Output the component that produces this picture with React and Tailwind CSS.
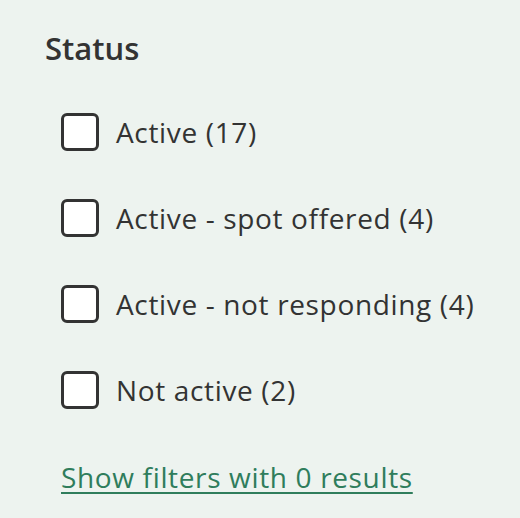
import { useState } from 'react';

const options = [
  { label: 'Active', count: 17 },
  { label: 'Active - spot offered', count: 4 },
  { label: 'Active - not responding', count: 4 },
  { label: 'Not active', count: 2 },
];

export default function App() {
  const [checked, setChecked] = useState({});

  return (
    <div className="min-h-screen w-[520px] h-[518px] bg-[#edf3ef] text-[#333333] font-['Open_Sans',sans-serif] pl-[45px] pt-[26px]">
      <h3 className="text-[31px] font-semibold leading-[44px]">Status</h3>
      <div className="pl-[16px]">
        <div className="mt-[43px] flex flex-col gap-[48px]">
          {options.map((o, i) => (
            <label key={i} className="flex items-center gap-[17px] h-[38px] cursor-pointer">
              <input
                type="checkbox"
                checked={!!checked[i]}
                onChange={() => setChecked({ ...checked, [i]: !checked[i] })}
                className="appearance-none w-[38px] h-[38px] shrink-0 rounded-[6px] border-[3px] border-[#333333] bg-white"
              />
              <span className="text-[28px] leading-[38px] tracking-[0.65px]">{o.label} ({o.count})</span>
            </label>
          ))}
        </div>
        <a href="#" className="inline-block mt-[49px] text-[28px] leading-[38px] tracking-[0.65px] text-[#2f7d5c] underline decoration-2 underline-offset-[4px]">
          Show filters with 0 results
        </a>
      </div>
    </div>
  );
}
